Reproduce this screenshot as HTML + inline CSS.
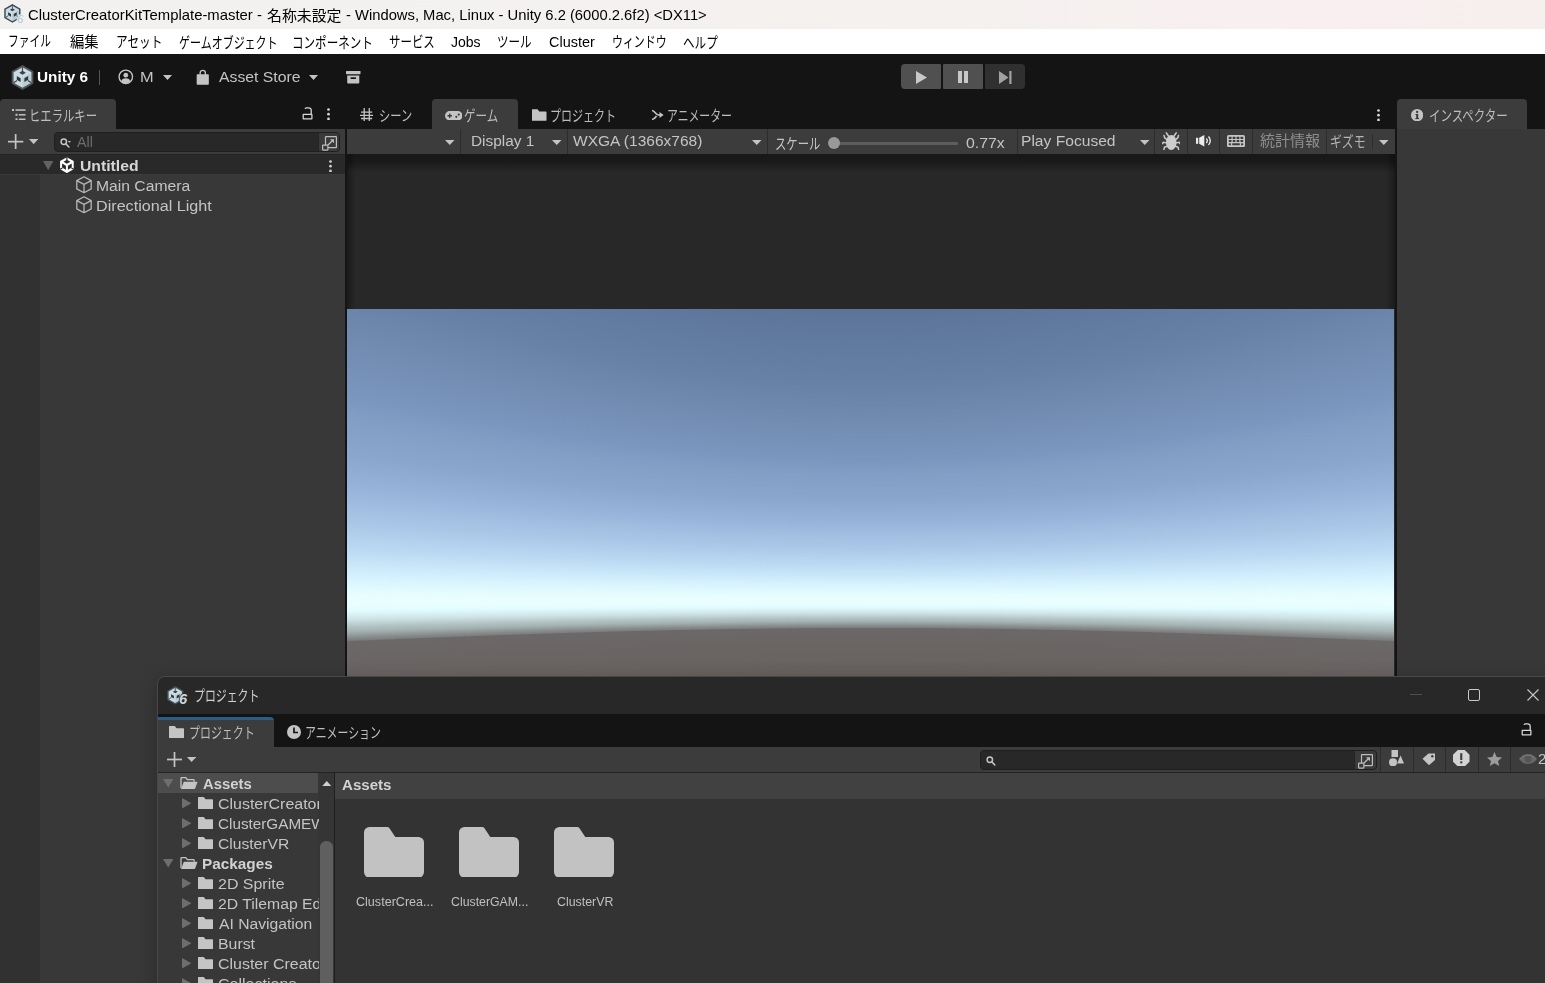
<!DOCTYPE html>
<html lang="ja"><head><meta charset="utf-8"><title>Unity</title>
<style>
html,body{margin:0;padding:0}
body{width:1545px;height:983px;overflow:hidden;background:#141414;position:relative;font-family:"Liberation Sans","Noto Sans CJK JP",sans-serif}
.r{position:absolute;display:block}
.t{position:absolute;white-space:nowrap;line-height:20px;transform-origin:0 0;font-family:"Liberation Sans","Noto Sans CJK JP",sans-serif;filter:grayscale(1)}
.sky{overflow:hidden;--g:linear-gradient(to bottom,#5a7096 0.00%,#5d7499 7.14%,#6680a6 25.00%,#738db3 35.95%,#7b96be 42.86%,#829ec5 46.67%,#8aa6cd 52.62%,#97b3d9 57.86%,#a9c5e6 63.33%,#b8d5f1 67.26%,#c6e3f8 69.93%,#d6f2fe 72.62%,#e5fdff 75.24%,#ebfeff 76.67%,#e5fdff 77.86%,#dffbff 78.21%,#cfe3e6 79.52%,#b3c4c5 80.71%,#a3b1b1 81.55%,#888c8d 82.52%,#7c7e7f 82.98%,#6c6868 83.17%,#67605d 94.76%,#665f5c 100.00%)}
.sky i{position:absolute;top:0;height:100%;background-image:var(--g);background-repeat:no-repeat;background-color:#665f5c}
</style></head>
<body>
<div class="r" style="left:0px;top:0px;width:1545px;height:29px;background:linear-gradient(to right,#f3f1f0 0%,#f4f1ef 62%,#f9eff0 84%,#f7eeee 100%);"></div>
<div class="r" style="left:0px;top:29px;width:1545px;height:25px;background:#ffffff;"></div>
<svg class="r" style="left:1.5999999999999996px;top:3.1999999999999993px;overflow:visible" width="20.8" height="20.8" viewBox="-13.830 -13.830 27.660 27.660"><polygon points="0,-12.5 10.83,-6.25 10.83,6.25 0,12.5 -10.83,6.25 -10.83,-6.25" fill="#3d4955"/><polygon points="0,-10.3 8.92,-5.15 8.92,5.15 0,10.3 -8.92,5.15 -8.92,-5.15" fill="#c8dce1"/><polygon points="0,0.4 8.92,-4.75 8.92,5.15 0,10.3" fill="#000" opacity=".07"/><polygon points="0,-6.7 3.3,-4.7 0,-2.7 -3.3,-4.7" fill="#3a4148"/><polygon points="-5.7,-1.5 -1.9,0.7 -1.9,4.4 -5.7,2.2" fill="#2f363d"/><polygon points="5.7,-1.5 1.9,0.7 1.9,4.4 5.700,2.2" fill="#2f363d"/><path d="M0-10.3V-6.5M-8.92 5.15-5.4 3.1M8.92 5.15 5.4 3.1" stroke="#3a4148" stroke-width="1.1" fill="none"/><text x="6" y="12.400" font-family="Liberation Sans, sans-serif" font-size="15" font-weight="normal" font-style="italic" fill="#a9c5cd" stroke="#f3f1f0" stroke-width="2.200" paint-order="stroke">6</text></svg>
<div class="t" style="left:28.01px;top:5.00px;font-size:15px;color:#000;transform:scaleX(0.9915)">ClusterCreatorKitTemplate-master -</div>
<div class="t" style="left:266.51px;top:5.50px;font-size:15px;color:#000;transform:scaleX(0.9932)">名称未設定</div>
<div class="t" style="left:345.81px;top:5.00px;font-size:15px;color:#000;transform:scaleX(0.9841)">- Windows, Mac, Linux - Unity 6.2 (6000.2.6f2) &lt;DX11&gt;</div>
<div class="t" style="left:7.54px;top:31.00px;font-size:15px;color:#000;transform:scaleX(0.7143)">ファイル</div>
<div class="t" style="left:69.50px;top:32.00px;font-size:15px;color:#000;transform:scaleX(0.9558)">編集</div>
<div class="t" style="left:116.22px;top:31.50px;font-size:15px;color:#000;transform:scaleX(0.7766)">アセット</div>
<div class="t" style="left:178.77px;top:32.50px;font-size:15px;color:#000;transform:scaleX(0.7328)">ゲームオブジェクト</div>
<div class="t" style="left:292.48px;top:32.50px;font-size:15px;color:#000;transform:scaleX(0.7704)">コンポーネント</div>
<div class="t" style="left:388.74px;top:32.00px;font-size:15px;color:#000;transform:scaleX(0.7633)">サービス</div>
<div class="t" style="left:497.23px;top:31.50px;font-size:15px;color:#000;transform:scaleX(0.7672)">ツール</div>
<div class="t" style="left:611.82px;top:32.00px;font-size:15px;color:#000;transform:scaleX(0.7283)">ウィンドウ</div>
<div class="t" style="left:683.23px;top:32.50px;font-size:15px;color:#000;transform:scaleX(0.7727)">ヘルプ</div>
<div class="t" style="left:451.00px;top:32.00px;font-size:15px;color:#000;transform:scaleX(0.9355)">Jobs</div>
<div class="t" style="left:548.55px;top:32.00px;font-size:15px;color:#000;transform:scaleX(0.9641)">Cluster</div>
<div class="r" style="left:0px;top:54px;width:1545px;height:45px;background:#141414;"></div>
<svg class="r" style="left:8.7px;top:63.5px;" width="27.0" height="27.0" viewBox="-13.500 -13.500 27.000 27.000"><polygon points="0,-12.5 10.83,-6.25 10.83,6.25 0,12.5 -10.83,6.25 -10.83,-6.25" fill="#50555a"/><polygon points="0,-10.3 8.92,-5.15 8.92,5.15 0,10.3 -8.92,5.15 -8.92,-5.15" fill="#c8dce1"/><polygon points="0,0.4 8.92,-4.75 8.92,5.15 0,10.3" fill="#000" opacity=".07"/><polygon points="0,-6.7 3.3,-4.7 0,-2.7 -3.3,-4.7" fill="#3a4148"/><polygon points="-5.7,-1.5 -1.9,0.7 -1.9,4.4 -5.7,2.2" fill="#2f363d"/><polygon points="5.7,-1.5 1.9,0.7 1.9,4.4 5.700,2.2" fill="#2f363d"/><path d="M0-10.3V-6.5M-8.92 5.15-5.4 3.1M8.92 5.15 5.4 3.1" stroke="#3a4148" stroke-width="1.1" fill="none"/></svg>
<div class="t" style="left:36.98px;top:67.00px;font-size:15px;color:#ffffff;transform:scaleX(1.0204);font-weight:bold">Unity 6</div>
<div class="r" style="left:99px;top:69.5px;width:1px;height:15.3px;background:#555555;"></div>
<svg class="r" style="left:118.2px;top:69.3px;" width="15.6" height="15.6" viewBox="0 0 16 16"><circle cx="8" cy="8" r="6.9" fill="none" stroke="#c4c4c4" stroke-width="1.4"/><circle cx="8" cy="6.3" r="2.4" fill="#c4c4c4"/><path d="M3.2 12.6c1-2.4 2.6-3 4.8-3s3.800.6 4.800 3a6.800 6.800 0 0 1-9.600 0z" fill="#c4c4c4"/></svg>
<div class="t" style="left:139.91px;top:67.00px;font-size:15px;color:#c4c4c4;transform:scaleX(1.0909)">M</div>
<svg class="r" style="left:163px;top:75px;" width="9" height="5" viewBox="0 0 9 5"><polygon points="0,0 9,0 4.5,5" fill="#c4c4c4"/></svg>
<svg class="r" style="left:196px;top:68.5px;" width="13.5" height="16.5" viewBox="0 0 14 17"><path d="M1.500 5.500h11a.8.8 0 0 1 .8.8v9.200a.8.8 0 0 1-.8.8h-11a.8.8 0 0 1-.8-.8v-9.200a.8.8 0 0 1 .8-.8z" fill="#c4c4c4"/><path d="M4.300 6.500v-2.500a2.700 2.700 0 0 1 5.400 0v2.500" fill="none" stroke="#c4c4c4" stroke-width="1.400"/></svg>
<div class="t" style="left:219.00px;top:67.00px;font-size:15px;color:#c4c4c4;transform:scaleX(1.0519)">Asset Store</div>
<svg class="r" style="left:309px;top:75px;" width="9" height="5" viewBox="0 0 9 5"><polygon points="0,0 9,0 4.5,5" fill="#c4c4c4"/></svg>
<svg class="r" style="left:346px;top:71px;" width="14.5" height="12.5" viewBox="0 0 14.5 12.5"><rect x="0" y="0" width="14.500" height="3.200" rx=".6" fill="#c4c4c4"/><path d="M1.200 4.600h12.100v7a.9.9 0 0 1-.9.9h-10.300a.9.9 0 0 1-.9-.9z" fill="#c4c4c4"/><rect x="4.600" y="6.300" width="5.300" height="1.700" fill="#141414"/></svg>
<div class="r" style="left:901px;top:64px;width:40px;height:25px;background:#505050;border-radius:4px 1px 1px 4px"></div>
<div class="r" style="left:943px;top:64px;width:40px;height:25px;background:#505050;border-radius:1px"></div>
<div class="r" style="left:985px;top:64px;width:40px;height:25px;background:#303030;border-radius:1px 4px 4px 1px"></div>
<svg class="r" style="left:915.5px;top:70.5px;" width="11" height="13" viewBox="0 0 11 13"><polygon points="0,0 11,6.500 0,13" fill="#c8c8c8"/></svg>
<div class="r" style="left:957.8px;top:70.5px;width:4px;height:12.8px;background:#c8c8c8;"></div>
<div class="r" style="left:964.3px;top:70.5px;width:4px;height:12.8px;background:#c8c8c8;"></div>
<svg class="r" style="left:998.7px;top:70.5px;" width="13" height="13" viewBox="0 0 13 13"><polygon points="0,0 9.500,6.500 0,13" fill="#a2a2a2"/><rect x="10.300" y="0" width="2.200" height="13" fill="#a2a2a2"/></svg>
<div class="r" style="left:0px;top:99px;width:116px;height:31px;background:#3c3c3c;border-radius:4px 4px 0 0"></div>
<svg class="r" style="left:12px;top:108.5px;" width="14" height="11.5" viewBox="0 0 14 11.5"><rect x="0" y="0" width="2" height="2" fill="#c4c4c4"/><rect x="3.500" y=".3" width="10" height="1.500" fill="#c4c4c4"/><rect x="3.500" y="4.800" width="2" height="2" fill="#c4c4c4"/><rect x="6.800" y="5.050" width="6.700" height="1.500" fill="#c4c4c4"/><rect x="3.500" y="9.300" width="2" height="2" fill="#c4c4c4"/><rect x="6.800" y="9.550" width="6.700" height="1.500" fill="#c4c4c4"/></svg>
<div class="t" style="left:28.73px;top:106.00px;font-size:15px;color:#bdbdbd;transform:scaleX(0.7558)">ヒエラルキー</div>
<svg class="r" style="left:301.5px;top:106.8px;" width="11.5" height="13" viewBox="0 0 11.5 13"><rect x="1.200" y="7.300" width="8.700" height="4.500" rx=".3" fill="none" stroke="#d8d8d8" stroke-width="1.250"/><path d="M9.200 7V3.500Q9.200 .9 6.500 .9H4.300Q3.300 .9 3.100 1.900" fill="none" stroke="#d8d8d8" stroke-width="1.300"/></svg>
<svg class="r" style="left:326.5px;top:107.9px;" width="3" height="12.4" viewBox="0 0 3 12.4"><circle cx="1.500" cy="1.500" r="1.350" fill="#d8d8d8"/><circle cx="1.500" cy="6.200" r="1.350" fill="#d8d8d8"/><circle cx="1.500" cy="10.900" r="1.350" fill="#d8d8d8"/></svg>
<div class="r" style="left:0px;top:129px;width:345px;height:25px;background:#3c3c3c;"></div>
<div class="r" style="left:0px;top:154px;width:345px;height:829px;background:#383838;"></div>
<div class="r" style="left:0px;top:154px;width:40px;height:829px;background:#313131;"></div>
<div class="r" style="left:0px;top:154px;width:345px;height:20.5px;background:#292929;"></div>
<div class="r" style="left:0px;top:153.8px;width:345px;height:1.2px;background:#232323;"></div>
<div class="r" style="left:0px;top:173.8px;width:345px;height:1.2px;background:#3b3b3b;"></div>
<svg class="r" style="left:8.3px;top:134.2px;" width="15.3" height="15.3" viewBox="0 0 15.3 15.3"><rect x="0" y="6.800000000000001" width="15.3" height="1.700" fill="#c4c4c4"/><rect x="6.800000000000001" y="0" width="1.700" height="15.3" fill="#c4c4c4"/></svg>
<svg class="r" style="left:28.8px;top:139.2px;" width="9.2" height="5.2" viewBox="0 0 9.2 5.2"><polygon points="0,0 9.2,0 4.6,5.2" fill="#c4c4c4"/></svg>
<div class="r" style="left:54px;top:132.2px;width:286.4px;height:19.4px;background:#282828;border-radius:4px;border:1px solid #1f1f1f;box-sizing:border-box"></div>
<div class="r" style="left:317.9px;top:133.2px;width:21.5px;height:17.4px;background:#3a3a3a;border-radius:0 3px 3px 0;border-left:1px solid #242424;box-sizing:border-box"></div>
<svg class="r" style="left:322.29999999999995px;top:135.49999999999997px;" width="15" height="15" viewBox="0 0 15 15"><rect x="3.500" y=".6" width="10.900" height="11.100" rx=".6" fill="none" stroke="#bdbdbd" stroke-width="1.200"/><rect x=".6" y="9.100" width="5.300" height="5" rx=".5" fill="#3a3a3a" stroke="#bdbdbd" stroke-width="1.200"/><path d="M6 9l4.800-4.800" fill="none" stroke="#bdbdbd" stroke-width="1.300"/><polygon points="8,3.200 12,3.200 12,7.200" fill="#bdbdbd"/></svg>
<svg class="r" style="left:60px;top:137.6px;" width="12" height="10" viewBox="0 0 12 10"><circle cx="3.800" cy="3.800" r="2.700" fill="none" stroke="#c4c4c4" stroke-width="1.500"/><path d="M5.800 5.800l3 3.200" stroke="#c4c4c4" stroke-width="1.600" stroke-linecap="round"/><polygon points="7.800,2.900 11,2.900 9.400,4.700" fill="#c4c4c4"/></svg>
<div class="t" style="left:76.98px;top:132.00px;font-size:14px;color:#6c6c6c;transform:scaleX(1.0174)">All</div>
<svg class="r" style="left:42.7px;top:160.8px;" width="10.4" height="9.2" viewBox="0 0 10.4 9.2"><polygon points="0,0 10.4,0 5.2,9.2" fill="#626262"/></svg>
<svg class="r" style="left:59.2px;top:156.6px;" width="15.8" height="16.4" viewBox="0 0 16 16.5"><polygon points="8,.2 14.900,4.100 14.900,12.400 8,16.300 1.100,12.400 1.100,4.100" fill="#ffffff"/><polygon points="8,2.700 11.500,4.700 8,6.700 4.500,4.700" fill="#292929"/><polygon points="3.100,6.500 7,8.700 7,12.900 3.100,10.700" fill="#292929"/><polygon points="12.900,6.500 9,8.700 9,12.900 12.900,10.700" fill="#292929"/><path stroke="#292929" stroke-width="1.200" fill="none" d="M8 .2v2.800M1.100 12.400l2.300-1.300M14.900 12.400l-2.300-1.300"/></svg>
<div class="t" style="left:79.86px;top:156.00px;font-size:14px;color:#d6d6d6;transform:scaleX(1.1243);font-weight:bold">Untitled</div>
<svg class="r" style="left:328.5px;top:159.5px;" width="3" height="12.4" viewBox="0 0 3 12.4"><circle cx="1.500" cy="1.500" r="1.350" fill="#d0d0d0"/><circle cx="1.500" cy="6.200" r="1.350" fill="#d0d0d0"/><circle cx="1.500" cy="10.900" r="1.350" fill="#d0d0d0"/></svg>
<svg class="r" style="left:76px;top:176.3px;" width="16" height="17.5" viewBox="0 0 16 17.5"><path d="M8 .8 15.200 4.600 15.200 12.900 8 16.700 .8 12.900 .8 4.600z M.8 4.600 8 8.400 15.200 4.600 M8 8.400v8.300" fill="none" stroke="#b6b6b6" stroke-width="1.300" stroke-linejoin="round"/></svg>
<div class="t" style="left:95.88px;top:176.00px;font-size:14px;color:#c4c4c4;transform:scaleX(1.1205)">Main Camera</div>
<svg class="r" style="left:76px;top:196.3px;" width="16" height="17.5" viewBox="0 0 16 17.5"><path d="M8 .8 15.200 4.600 15.200 12.900 8 16.700 .8 12.900 .8 4.600z M.8 4.600 8 8.400 15.200 4.600 M8 8.400v8.300" fill="none" stroke="#b6b6b6" stroke-width="1.300" stroke-linejoin="round"/></svg>
<div class="t" style="left:95.84px;top:196.00px;font-size:14px;color:#c4c4c4;transform:scaleX(1.1536)">Directional Light</div>
<div class="r" style="left:432px;top:99px;width:86px;height:30px;background:#3c3c3c;border-radius:4px 4px 0 0"></div>
<svg class="r" style="left:359.7px;top:107.6px;" width="13.2" height="13.4" viewBox="0 0 13.2 13.4"><path d="M4.200 0v13.400M9.300 0v13.400M1 4.200h11.200M0 7.400h13.200M1 10.500h11.200" stroke="#c4c4c4" stroke-width="1.300" fill="none"/></svg>
<div class="t" style="left:378.76px;top:105.50px;font-size:15px;color:#bdbdbd;transform:scaleX(0.7492)">シーン</div>
<svg class="r" style="left:444.5px;top:110.5px;" width="17.5" height="9.5" viewBox="0 0 17.5 9.5"><rect x="0" y="0" width="17.500" height="9.500" rx="4.750" fill="#c4c4c4"/><path d="M4.700 2.500v4.500M2.450 4.750h4.500" stroke="#3c3c3c" stroke-width="1.300"/><circle cx="11.300" cy="5.800" r="1.100" fill="#3c3c3c"/><circle cx="13.800" cy="3.600" r="1.100" fill="#3c3c3c"/></svg>
<div class="t" style="left:464.23px;top:106.00px;font-size:15px;color:#bdbdbd;transform:scaleX(0.7674)">ゲーム</div>
<svg class="r" style="left:532px;top:109px;" width="14.5" height="12" viewBox="0 0 15 12"><path d="M.6 0h5.200l1.700 2.300h6.900a.6.6 0 0 1 .6.600v8.500a.6.6 0 0 1-.6.600h-13.800a.6.6 0 0 1-.6-.6v-10.800a.6.6 0 0 1 .6-.6z" fill="#c4c4c4"/></svg>
<div class="t" style="left:550.28px;top:105.70px;font-size:15px;color:#bdbdbd;transform:scaleX(0.7322)">プロジェクト</div>
<svg class="r" style="left:651px;top:109px;" width="12.5" height="12" viewBox="0 0 12.5 12"><path d="M1 1.500c3 .3 3.500 4.200 6.500 4.500h4M1 10.500c2.500-.3 3.500-2 4.500-3.500" fill="none" stroke="#c4c4c4" stroke-width="1.700"/><polygon points="8.500,3 12.500,6 8.500,9" fill="#c4c4c4"/></svg>
<div class="t" style="left:666.53px;top:106.00px;font-size:15px;color:#bdbdbd;transform:scaleX(0.7234)">アニメーター</div>
<svg class="r" style="left:1376.5px;top:108.5px;" width="3" height="12.4" viewBox="0 0 3 12.4"><circle cx="1.500" cy="1.500" r="1.350" fill="#d8d8d8"/><circle cx="1.500" cy="6.200" r="1.350" fill="#d8d8d8"/><circle cx="1.500" cy="10.900" r="1.350" fill="#d8d8d8"/></svg>
<div class="r" style="left:347px;top:129px;width:1048px;height:25px;background:#3c3c3c;"></div>
<div class="r" style="left:347px;top:154px;width:1047.5px;height:829px;background:#282828;"></div>
<div class="r" style="left:347px;top:154px;width:1047.5px;height:18px;background:linear-gradient(to bottom,rgba(0,0,0,.42) 0,rgba(0,0,0,.36) 45%,rgba(0,0,0,0) 100%);"></div>
<div class="r" style="left:347px;top:154px;width:9px;height:523px;background:linear-gradient(to right,rgba(0,0,0,.32),rgba(0,0,0,0));"></div>
<div class="r" style="left:1385.5px;top:154px;width:9px;height:155px;background:linear-gradient(to left,rgba(0,0,0,.32),rgba(0,0,0,0));"></div>
<div class="r" style="left:460px;top:129px;width:1.3px;height:25px;background:#2c2c2c;"></div>
<div class="r" style="left:567px;top:129px;width:1.3px;height:25px;background:#2c2c2c;"></div>
<div class="r" style="left:767px;top:129px;width:1.3px;height:25px;background:#2c2c2c;"></div>
<div class="r" style="left:1017px;top:129px;width:1.3px;height:25px;background:#2c2c2c;"></div>
<div class="r" style="left:1154px;top:129px;width:1.3px;height:25px;background:#2c2c2c;"></div>
<div class="r" style="left:1187px;top:129px;width:1.3px;height:25px;background:#2c2c2c;"></div>
<div class="r" style="left:1219px;top:129px;width:1.3px;height:25px;background:#2c2c2c;"></div>
<div class="r" style="left:1252px;top:129px;width:1.3px;height:25px;background:#2c2c2c;"></div>
<div class="r" style="left:1326px;top:129px;width:1.3px;height:25px;background:#2c2c2c;"></div>
<div class="r" style="left:1372px;top:133.5px;width:1px;height:15px;background:#2c2c2c;"></div>
<svg class="r" style="left:445px;top:139.5px;" width="9.5" height="5" viewBox="0 0 9.5 5"><polygon points="0,0 9.5,0 4.75,5" fill="#c4c4c4"/></svg>
<div class="t" style="left:471.40px;top:131.00px;font-size:14px;color:#c4c4c4;transform:scaleX(1.0983)">Display 1</div>
<svg class="r" style="left:552px;top:139.5px;" width="9.5" height="5" viewBox="0 0 9.5 5"><polygon points="0,0 9.5,0 4.75,5" fill="#c4c4c4"/></svg>
<div class="t" style="left:572.50px;top:131.00px;font-size:14px;color:#c4c4c4;transform:scaleX(1.1078)">WXGA (1366x768)</div>
<svg class="r" style="left:752px;top:139.5px;" width="9.5" height="5" viewBox="0 0 9.5 5"><polygon points="0,0 9.5,0 4.75,5" fill="#c4c4c4"/></svg>
<div class="t" style="left:775.26px;top:133.75px;font-size:15px;color:#c4c4c4;transform:scaleX(0.7582)">スケール</div>
<div class="r" style="left:838px;top:142px;width:120px;height:2.5px;background:#5e5e5e;border-radius:1px"></div>
<div class="r" style="left:828px;top:137px;width:12px;height:12px;background:#999999;border-radius:6px"></div>
<div class="t" style="left:966.00px;top:133.00px;font-size:14px;color:#c4c4c4;transform:scaleX(1.1325)">0.77x</div>
<div class="t" style="left:1021.39px;top:131.00px;font-size:14px;color:#c4c4c4;transform:scaleX(1.1145)">Play Focused</div>
<svg class="r" style="left:1140px;top:139.5px;" width="9.5" height="5" viewBox="0 0 9.5 5"><polygon points="0,0 9.5,0 4.75,5" fill="#c4c4c4"/></svg>
<svg class="r" style="left:1161.8px;top:131.8px;" width="18.5" height="18.2" viewBox="0 0 18.5 18.2"><ellipse cx="9.250" cy="10.500" rx="5.300" ry="7.500" fill="#cdcdcd"/><path d="M6.400 4 4.300 .8M12.100 4 14.200 .8M5 7.600 2.700 5.800 2 3.400M13.500 7.600 15.800 5.800 16.500 3.400M4.200 10.900 1.300 10.200 .5 11.700M14.300 10.900 17.200 10.200 18 11.700M4.900 14.300 2.400 15.300 1.900 17.600M13.600 14.300 16.100 15.300 16.600 17.600" stroke="#cdcdcd" stroke-width="1.500" fill="none" stroke-linecap="round" stroke-linejoin="round"/></svg>
<svg class="r" style="left:1195.5px;top:135px;" width="16" height="11.5" viewBox="0 0 16 11.5"><rect x="0" y="2.800" width="2.200" height="6" fill="#ececec"/><polygon points="3.200,2.800 8.300,0 8.300,11.500 3.200,8.800" fill="#ececec"/><path d="M10.300 3.500a3.200 3.200 0 0 1 0 4.600M12.500 1.600a6 6 0 0 1 0 8.400" stroke="#ececec" stroke-width="1.400" fill="none"/></svg>
<svg class="r" style="left:1227px;top:134.8px;" width="18" height="12.2" viewBox="0 0 18 12.2"><rect x="0" y="0" width="18" height="12.200" rx="1.600" fill="#c4c4c4"/><rect x="1.8" y="1.8" width="2.700" height="2.100" rx=".5" fill="#3c3c3c"/><rect x="5.7" y="1.8" width="2.700" height="2.100" rx=".5" fill="#3c3c3c"/><rect x="9.6" y="1.8" width="2.700" height="2.100" rx=".5" fill="#3c3c3c"/><rect x="13.5" y="1.8" width="2.700" height="2.100" rx=".5" fill="#3c3c3c"/><rect x="1.8" y="5.0" width="2.700" height="2.100" rx=".5" fill="#3c3c3c"/><rect x="5.7" y="5.0" width="2.700" height="2.100" rx=".5" fill="#3c3c3c"/><rect x="9.6" y="5.0" width="2.700" height="2.100" rx=".5" fill="#3c3c3c"/><rect x="13.5" y="5.0" width="2.700" height="2.100" rx=".5" fill="#3c3c3c"/><rect x="1.800" y="8.200" width="2.200" height="2.100" rx=".5" fill="#3c3c3c"/><rect x="5.200" y="8.200" width="7.600" height="2.100" rx=".5" fill="#3c3c3c"/><rect x="14" y="8.200" width="2.200" height="2.100" rx=".5" fill="#3c3c3c"/></svg>
<div class="t" style="left:1260.00px;top:131.40px;font-size:15px;color:#8e8e8e;transform:scaleX(1.0000)">統計情報</div>
<div class="t" style="left:1330.21px;top:131.50px;font-size:15px;color:#b4b4b4;transform:scaleX(0.7907)">ギズモ</div>
<svg class="r" style="left:1379px;top:139.5px;" width="9.5" height="5" viewBox="0 0 9.5 5"><polygon points="0,0 9.5,0 4.75,5" fill="#c4c4c4"/></svg>
<div class="r sky" style="left:347px;top:309px;width:1047.2px;height:368px"><i style="left:0px;width:4px;background-size:100% 610.4px;background-position:0 -175.1px"></i><i style="left:4px;width:4px;background-size:100% 607.9px;background-position:0 -173.2px"></i><i style="left:8px;width:4px;background-size:100% 605.5px;background-position:0 -171.3px"></i><i style="left:12px;width:4px;background-size:100% 603.0px;background-position:0 -169.5px"></i><i style="left:16px;width:4px;background-size:100% 600.6px;background-position:0 -167.6px"></i><i style="left:20px;width:4px;background-size:100% 598.2px;background-position:0 -165.8px"></i><i style="left:24px;width:4px;background-size:100% 595.8px;background-position:0 -163.9px"></i><i style="left:28px;width:4px;background-size:100% 593.4px;background-position:0 -162.1px"></i><i style="left:32px;width:4px;background-size:100% 591.0px;background-position:0 -160.3px"></i><i style="left:36px;width:4px;background-size:100% 588.6px;background-position:0 -158.5px"></i><i style="left:40px;width:4px;background-size:100% 586.2px;background-position:0 -156.6px"></i><i style="left:44px;width:4px;background-size:100% 583.9px;background-position:0 -154.8px"></i><i style="left:48px;width:4px;background-size:100% 581.5px;background-position:0 -153.1px"></i><i style="left:52px;width:4px;background-size:100% 579.2px;background-position:0 -151.3px"></i><i style="left:56px;width:4px;background-size:100% 576.8px;background-position:0 -149.5px"></i><i style="left:60px;width:4px;background-size:100% 574.5px;background-position:0 -147.7px"></i><i style="left:64px;width:4px;background-size:100% 572.2px;background-position:0 -146.0px"></i><i style="left:68px;width:4px;background-size:100% 569.9px;background-position:0 -144.2px"></i><i style="left:72px;width:4px;background-size:100% 567.6px;background-position:0 -142.5px"></i><i style="left:76px;width:4px;background-size:100% 565.3px;background-position:0 -140.7px"></i><i style="left:80px;width:4px;background-size:100% 563.1px;background-position:0 -139.0px"></i><i style="left:84px;width:4px;background-size:100% 560.8px;background-position:0 -137.3px"></i><i style="left:88px;width:4px;background-size:100% 558.6px;background-position:0 -135.6px"></i><i style="left:92px;width:4px;background-size:100% 556.3px;background-position:0 -133.9px"></i><i style="left:96px;width:4px;background-size:100% 554.1px;background-position:0 -132.2px"></i><i style="left:100px;width:4px;background-size:100% 551.9px;background-position:0 -130.5px"></i><i style="left:104px;width:4px;background-size:100% 549.7px;background-position:0 -128.8px"></i><i style="left:108px;width:4px;background-size:100% 547.5px;background-position:0 -127.2px"></i><i style="left:112px;width:4px;background-size:100% 545.4px;background-position:0 -125.5px"></i><i style="left:116px;width:4px;background-size:100% 543.2px;background-position:0 -123.9px"></i><i style="left:120px;width:4px;background-size:100% 541.1px;background-position:0 -122.2px"></i><i style="left:124px;width:4px;background-size:100% 538.9px;background-position:0 -120.6px"></i><i style="left:128px;width:4px;background-size:100% 536.8px;background-position:0 -119.0px"></i><i style="left:132px;width:4px;background-size:100% 534.7px;background-position:0 -117.4px"></i><i style="left:136px;width:4px;background-size:100% 532.6px;background-position:0 -115.8px"></i><i style="left:140px;width:4px;background-size:100% 530.5px;background-position:0 -114.2px"></i><i style="left:144px;width:4px;background-size:100% 528.5px;background-position:0 -112.6px"></i><i style="left:148px;width:4px;background-size:100% 526.4px;background-position:0 -111.1px"></i><i style="left:152px;width:4px;background-size:100% 524.4px;background-position:0 -109.5px"></i><i style="left:156px;width:4px;background-size:100% 522.3px;background-position:0 -108.0px"></i><i style="left:160px;width:4px;background-size:100% 520.3px;background-position:0 -106.4px"></i><i style="left:164px;width:4px;background-size:100% 518.3px;background-position:0 -104.9px"></i><i style="left:168px;width:4px;background-size:100% 516.4px;background-position:0 -103.4px"></i><i style="left:172px;width:4px;background-size:100% 514.4px;background-position:0 -101.9px"></i><i style="left:176px;width:4px;background-size:100% 512.4px;background-position:0 -100.4px"></i><i style="left:180px;width:4px;background-size:100% 510.5px;background-position:0 -98.9px"></i><i style="left:184px;width:4px;background-size:100% 508.6px;background-position:0 -97.5px"></i><i style="left:188px;width:4px;background-size:100% 506.7px;background-position:0 -96.0px"></i><i style="left:192px;width:4px;background-size:100% 504.8px;background-position:0 -94.6px"></i><i style="left:196px;width:4px;background-size:100% 502.9px;background-position:0 -93.2px"></i><i style="left:200px;width:4px;background-size:100% 501.0px;background-position:0 -91.7px"></i><i style="left:204px;width:4px;background-size:100% 499.2px;background-position:0 -90.3px"></i><i style="left:208px;width:4px;background-size:100% 497.4px;background-position:0 -89.0px"></i><i style="left:212px;width:4px;background-size:100% 495.6px;background-position:0 -87.6px"></i><i style="left:216px;width:4px;background-size:100% 493.8px;background-position:0 -86.2px"></i><i style="left:220px;width:4px;background-size:100% 492.0px;background-position:0 -84.9px"></i><i style="left:224px;width:4px;background-size:100% 490.2px;background-position:0 -83.5px"></i><i style="left:228px;width:4px;background-size:100% 488.5px;background-position:0 -82.2px"></i><i style="left:232px;width:4px;background-size:100% 486.8px;background-position:0 -80.9px"></i><i style="left:236px;width:4px;background-size:100% 485.1px;background-position:0 -79.6px"></i><i style="left:240px;width:4px;background-size:100% 483.4px;background-position:0 -78.3px"></i><i style="left:244px;width:4px;background-size:100% 481.7px;background-position:0 -77.0px"></i><i style="left:248px;width:4px;background-size:100% 480.1px;background-position:0 -75.8px"></i><i style="left:252px;width:4px;background-size:100% 478.4px;background-position:0 -74.5px"></i><i style="left:256px;width:4px;background-size:100% 476.8px;background-position:0 -73.3px"></i><i style="left:260px;width:4px;background-size:100% 475.2px;background-position:0 -72.1px"></i><i style="left:264px;width:4px;background-size:100% 473.6px;background-position:0 -70.9px"></i><i style="left:268px;width:4px;background-size:100% 472.1px;background-position:0 -69.7px"></i><i style="left:272px;width:4px;background-size:100% 470.5px;background-position:0 -68.5px"></i><i style="left:276px;width:4px;background-size:100% 469.0px;background-position:0 -67.3px"></i><i style="left:280px;width:4px;background-size:100% 467.5px;background-position:0 -66.2px"></i><i style="left:284px;width:4px;background-size:100% 466.0px;background-position:0 -65.1px"></i><i style="left:288px;width:4px;background-size:100% 464.6px;background-position:0 -64.0px"></i><i style="left:292px;width:4px;background-size:100% 463.1px;background-position:0 -62.9px"></i><i style="left:296px;width:4px;background-size:100% 461.7px;background-position:0 -61.8px"></i><i style="left:300px;width:4px;background-size:100% 460.3px;background-position:0 -60.7px"></i><i style="left:304px;width:4px;background-size:100% 458.9px;background-position:0 -59.7px"></i><i style="left:308px;width:4px;background-size:100% 457.6px;background-position:0 -58.6px"></i><i style="left:312px;width:4px;background-size:100% 456.2px;background-position:0 -57.6px"></i><i style="left:316px;width:4px;background-size:100% 454.9px;background-position:0 -56.6px"></i><i style="left:320px;width:4px;background-size:100% 453.6px;background-position:0 -55.6px"></i><i style="left:324px;width:4px;background-size:100% 452.4px;background-position:0 -54.7px"></i><i style="left:328px;width:4px;background-size:100% 451.1px;background-position:0 -53.7px"></i><i style="left:332px;width:4px;background-size:100% 449.9px;background-position:0 -52.8px"></i><i style="left:336px;width:4px;background-size:100% 448.7px;background-position:0 -51.8px"></i><i style="left:340px;width:4px;background-size:100% 447.5px;background-position:0 -50.9px"></i><i style="left:344px;width:4px;background-size:100% 446.3px;background-position:0 -50.1px"></i><i style="left:348px;width:4px;background-size:100% 445.2px;background-position:0 -49.2px"></i><i style="left:352px;width:4px;background-size:100% 444.1px;background-position:0 -48.3px"></i><i style="left:356px;width:4px;background-size:100% 443.0px;background-position:0 -47.5px"></i><i style="left:360px;width:4px;background-size:100% 441.9px;background-position:0 -46.7px"></i><i style="left:364px;width:4px;background-size:100% 440.9px;background-position:0 -45.9px"></i><i style="left:368px;width:4px;background-size:100% 439.9px;background-position:0 -45.1px"></i><i style="left:372px;width:4px;background-size:100% 438.9px;background-position:0 -44.4px"></i><i style="left:376px;width:4px;background-size:100% 437.9px;background-position:0 -43.6px"></i><i style="left:380px;width:4px;background-size:100% 436.9px;background-position:0 -42.9px"></i><i style="left:384px;width:4px;background-size:100% 436.0px;background-position:0 -42.2px"></i><i style="left:388px;width:4px;background-size:100% 435.1px;background-position:0 -41.5px"></i><i style="left:392px;width:4px;background-size:100% 434.2px;background-position:0 -40.9px"></i><i style="left:396px;width:4px;background-size:100% 433.4px;background-position:0 -40.2px"></i><i style="left:400px;width:4px;background-size:100% 432.6px;background-position:0 -39.6px"></i><i style="left:404px;width:4px;background-size:100% 431.8px;background-position:0 -39.0px"></i><i style="left:408px;width:4px;background-size:100% 431.0px;background-position:0 -38.4px"></i><i style="left:412px;width:4px;background-size:100% 430.2px;background-position:0 -37.8px"></i><i style="left:416px;width:4px;background-size:100% 429.5px;background-position:0 -37.3px"></i><i style="left:420px;width:4px;background-size:100% 428.8px;background-position:0 -36.7px"></i><i style="left:424px;width:4px;background-size:100% 428.2px;background-position:0 -36.2px"></i><i style="left:428px;width:4px;background-size:100% 427.5px;background-position:0 -35.7px"></i><i style="left:432px;width:4px;background-size:100% 426.9px;background-position:0 -35.2px"></i><i style="left:436px;width:4px;background-size:100% 426.3px;background-position:0 -34.8px"></i><i style="left:440px;width:4px;background-size:100% 425.7px;background-position:0 -34.4px"></i><i style="left:444px;width:4px;background-size:100% 425.2px;background-position:0 -33.9px"></i><i style="left:448px;width:4px;background-size:100% 424.7px;background-position:0 -33.6px"></i><i style="left:452px;width:4px;background-size:100% 424.2px;background-position:0 -33.2px"></i><i style="left:456px;width:4px;background-size:100% 423.7px;background-position:0 -32.8px"></i><i style="left:460px;width:4px;background-size:100% 423.3px;background-position:0 -32.5px"></i><i style="left:464px;width:4px;background-size:100% 422.9px;background-position:0 -32.2px"></i><i style="left:468px;width:4px;background-size:100% 422.5px;background-position:0 -31.9px"></i><i style="left:472px;width:4px;background-size:100% 422.1px;background-position:0 -31.6px"></i><i style="left:476px;width:4px;background-size:100% 421.8px;background-position:0 -31.4px"></i><i style="left:480px;width:4px;background-size:100% 421.5px;background-position:0 -31.1px"></i><i style="left:484px;width:4px;background-size:100% 421.2px;background-position:0 -30.9px"></i><i style="left:488px;width:4px;background-size:100% 421.0px;background-position:0 -30.8px"></i><i style="left:492px;width:4px;background-size:100% 420.8px;background-position:0 -30.6px"></i><i style="left:496px;width:4px;background-size:100% 420.6px;background-position:0 -30.4px"></i><i style="left:500px;width:4px;background-size:100% 420.4px;background-position:0 -30.3px"></i><i style="left:504px;width:4px;background-size:100% 420.3px;background-position:0 -30.2px"></i><i style="left:508px;width:4px;background-size:100% 420.2px;background-position:0 -30.1px"></i><i style="left:512px;width:4px;background-size:100% 420.1px;background-position:0 -30.1px"></i><i style="left:516px;width:4px;background-size:100% 420.0px;background-position:0 -30.0px"></i><i style="left:520px;width:4px;background-size:100% 420.0px;background-position:0 -30.0px"></i><i style="left:524px;width:4px;background-size:100% 420.0px;background-position:0 -30.0px"></i><i style="left:528px;width:4px;background-size:100% 420.0px;background-position:0 -30.0px"></i><i style="left:532px;width:4px;background-size:100% 420.1px;background-position:0 -30.1px"></i><i style="left:536px;width:4px;background-size:100% 420.2px;background-position:0 -30.1px"></i><i style="left:540px;width:4px;background-size:100% 420.3px;background-position:0 -30.2px"></i><i style="left:544px;width:4px;background-size:100% 420.4px;background-position:0 -30.3px"></i><i style="left:548px;width:4px;background-size:100% 420.6px;background-position:0 -30.4px"></i><i style="left:552px;width:4px;background-size:100% 420.8px;background-position:0 -30.6px"></i><i style="left:556px;width:4px;background-size:100% 421.0px;background-position:0 -30.8px"></i><i style="left:560px;width:4px;background-size:100% 421.2px;background-position:0 -30.9px"></i><i style="left:564px;width:4px;background-size:100% 421.5px;background-position:0 -31.1px"></i><i style="left:568px;width:4px;background-size:100% 421.8px;background-position:0 -31.4px"></i><i style="left:572px;width:4px;background-size:100% 422.1px;background-position:0 -31.6px"></i><i style="left:576px;width:4px;background-size:100% 422.5px;background-position:0 -31.9px"></i><i style="left:580px;width:4px;background-size:100% 422.9px;background-position:0 -32.2px"></i><i style="left:584px;width:4px;background-size:100% 423.3px;background-position:0 -32.5px"></i><i style="left:588px;width:4px;background-size:100% 423.7px;background-position:0 -32.8px"></i><i style="left:592px;width:4px;background-size:100% 424.2px;background-position:0 -33.2px"></i><i style="left:596px;width:4px;background-size:100% 424.7px;background-position:0 -33.6px"></i><i style="left:600px;width:4px;background-size:100% 425.2px;background-position:0 -33.9px"></i><i style="left:604px;width:4px;background-size:100% 425.7px;background-position:0 -34.4px"></i><i style="left:608px;width:4px;background-size:100% 426.3px;background-position:0 -34.8px"></i><i style="left:612px;width:4px;background-size:100% 426.9px;background-position:0 -35.2px"></i><i style="left:616px;width:4px;background-size:100% 427.5px;background-position:0 -35.7px"></i><i style="left:620px;width:4px;background-size:100% 428.2px;background-position:0 -36.2px"></i><i style="left:624px;width:4px;background-size:100% 428.8px;background-position:0 -36.7px"></i><i style="left:628px;width:4px;background-size:100% 429.5px;background-position:0 -37.3px"></i><i style="left:632px;width:4px;background-size:100% 430.2px;background-position:0 -37.8px"></i><i style="left:636px;width:4px;background-size:100% 431.0px;background-position:0 -38.4px"></i><i style="left:640px;width:4px;background-size:100% 431.8px;background-position:0 -39.0px"></i><i style="left:644px;width:4px;background-size:100% 432.6px;background-position:0 -39.6px"></i><i style="left:648px;width:4px;background-size:100% 433.4px;background-position:0 -40.2px"></i><i style="left:652px;width:4px;background-size:100% 434.2px;background-position:0 -40.9px"></i><i style="left:656px;width:4px;background-size:100% 435.1px;background-position:0 -41.5px"></i><i style="left:660px;width:4px;background-size:100% 436.0px;background-position:0 -42.2px"></i><i style="left:664px;width:4px;background-size:100% 436.9px;background-position:0 -42.9px"></i><i style="left:668px;width:4px;background-size:100% 437.9px;background-position:0 -43.6px"></i><i style="left:672px;width:4px;background-size:100% 438.9px;background-position:0 -44.4px"></i><i style="left:676px;width:4px;background-size:100% 439.9px;background-position:0 -45.1px"></i><i style="left:680px;width:4px;background-size:100% 440.9px;background-position:0 -45.9px"></i><i style="left:684px;width:4px;background-size:100% 441.9px;background-position:0 -46.7px"></i><i style="left:688px;width:4px;background-size:100% 443.0px;background-position:0 -47.5px"></i><i style="left:692px;width:4px;background-size:100% 444.1px;background-position:0 -48.3px"></i><i style="left:696px;width:4px;background-size:100% 445.2px;background-position:0 -49.2px"></i><i style="left:700px;width:4px;background-size:100% 446.3px;background-position:0 -50.1px"></i><i style="left:704px;width:4px;background-size:100% 447.5px;background-position:0 -50.9px"></i><i style="left:708px;width:4px;background-size:100% 448.7px;background-position:0 -51.8px"></i><i style="left:712px;width:4px;background-size:100% 449.9px;background-position:0 -52.8px"></i><i style="left:716px;width:4px;background-size:100% 451.1px;background-position:0 -53.7px"></i><i style="left:720px;width:4px;background-size:100% 452.4px;background-position:0 -54.7px"></i><i style="left:724px;width:4px;background-size:100% 453.6px;background-position:0 -55.6px"></i><i style="left:728px;width:4px;background-size:100% 454.9px;background-position:0 -56.6px"></i><i style="left:732px;width:4px;background-size:100% 456.2px;background-position:0 -57.6px"></i><i style="left:736px;width:4px;background-size:100% 457.6px;background-position:0 -58.6px"></i><i style="left:740px;width:4px;background-size:100% 458.9px;background-position:0 -59.7px"></i><i style="left:744px;width:4px;background-size:100% 460.3px;background-position:0 -60.7px"></i><i style="left:748px;width:4px;background-size:100% 461.7px;background-position:0 -61.8px"></i><i style="left:752px;width:4px;background-size:100% 463.1px;background-position:0 -62.9px"></i><i style="left:756px;width:4px;background-size:100% 464.6px;background-position:0 -64.0px"></i><i style="left:760px;width:4px;background-size:100% 466.0px;background-position:0 -65.1px"></i><i style="left:764px;width:4px;background-size:100% 467.5px;background-position:0 -66.2px"></i><i style="left:768px;width:4px;background-size:100% 469.0px;background-position:0 -67.3px"></i><i style="left:772px;width:4px;background-size:100% 470.5px;background-position:0 -68.5px"></i><i style="left:776px;width:4px;background-size:100% 472.1px;background-position:0 -69.7px"></i><i style="left:780px;width:4px;background-size:100% 473.6px;background-position:0 -70.9px"></i><i style="left:784px;width:4px;background-size:100% 475.2px;background-position:0 -72.1px"></i><i style="left:788px;width:4px;background-size:100% 476.8px;background-position:0 -73.3px"></i><i style="left:792px;width:4px;background-size:100% 478.4px;background-position:0 -74.5px"></i><i style="left:796px;width:4px;background-size:100% 480.1px;background-position:0 -75.8px"></i><i style="left:800px;width:4px;background-size:100% 481.7px;background-position:0 -77.0px"></i><i style="left:804px;width:4px;background-size:100% 483.4px;background-position:0 -78.3px"></i><i style="left:808px;width:4px;background-size:100% 485.1px;background-position:0 -79.6px"></i><i style="left:812px;width:4px;background-size:100% 486.8px;background-position:0 -80.9px"></i><i style="left:816px;width:4px;background-size:100% 488.5px;background-position:0 -82.2px"></i><i style="left:820px;width:4px;background-size:100% 490.2px;background-position:0 -83.5px"></i><i style="left:824px;width:4px;background-size:100% 492.0px;background-position:0 -84.9px"></i><i style="left:828px;width:4px;background-size:100% 493.8px;background-position:0 -86.2px"></i><i style="left:832px;width:4px;background-size:100% 495.6px;background-position:0 -87.6px"></i><i style="left:836px;width:4px;background-size:100% 497.4px;background-position:0 -89.0px"></i><i style="left:840px;width:4px;background-size:100% 499.2px;background-position:0 -90.3px"></i><i style="left:844px;width:4px;background-size:100% 501.0px;background-position:0 -91.7px"></i><i style="left:848px;width:4px;background-size:100% 502.9px;background-position:0 -93.2px"></i><i style="left:852px;width:4px;background-size:100% 504.8px;background-position:0 -94.6px"></i><i style="left:856px;width:4px;background-size:100% 506.7px;background-position:0 -96.0px"></i><i style="left:860px;width:4px;background-size:100% 508.6px;background-position:0 -97.5px"></i><i style="left:864px;width:4px;background-size:100% 510.5px;background-position:0 -98.9px"></i><i style="left:868px;width:4px;background-size:100% 512.4px;background-position:0 -100.4px"></i><i style="left:872px;width:4px;background-size:100% 514.4px;background-position:0 -101.9px"></i><i style="left:876px;width:4px;background-size:100% 516.4px;background-position:0 -103.4px"></i><i style="left:880px;width:4px;background-size:100% 518.3px;background-position:0 -104.9px"></i><i style="left:884px;width:4px;background-size:100% 520.3px;background-position:0 -106.4px"></i><i style="left:888px;width:4px;background-size:100% 522.3px;background-position:0 -108.0px"></i><i style="left:892px;width:4px;background-size:100% 524.4px;background-position:0 -109.5px"></i><i style="left:896px;width:4px;background-size:100% 526.4px;background-position:0 -111.1px"></i><i style="left:900px;width:4px;background-size:100% 528.5px;background-position:0 -112.6px"></i><i style="left:904px;width:4px;background-size:100% 530.5px;background-position:0 -114.2px"></i><i style="left:908px;width:4px;background-size:100% 532.6px;background-position:0 -115.8px"></i><i style="left:912px;width:4px;background-size:100% 534.7px;background-position:0 -117.4px"></i><i style="left:916px;width:4px;background-size:100% 536.8px;background-position:0 -119.0px"></i><i style="left:920px;width:4px;background-size:100% 538.9px;background-position:0 -120.6px"></i><i style="left:924px;width:4px;background-size:100% 541.1px;background-position:0 -122.2px"></i><i style="left:928px;width:4px;background-size:100% 543.2px;background-position:0 -123.9px"></i><i style="left:932px;width:4px;background-size:100% 545.4px;background-position:0 -125.5px"></i><i style="left:936px;width:4px;background-size:100% 547.5px;background-position:0 -127.2px"></i><i style="left:940px;width:4px;background-size:100% 549.7px;background-position:0 -128.8px"></i><i style="left:944px;width:4px;background-size:100% 551.9px;background-position:0 -130.5px"></i><i style="left:948px;width:4px;background-size:100% 554.1px;background-position:0 -132.2px"></i><i style="left:952px;width:4px;background-size:100% 556.3px;background-position:0 -133.9px"></i><i style="left:956px;width:4px;background-size:100% 558.6px;background-position:0 -135.6px"></i><i style="left:960px;width:4px;background-size:100% 560.8px;background-position:0 -137.3px"></i><i style="left:964px;width:4px;background-size:100% 563.1px;background-position:0 -139.0px"></i><i style="left:968px;width:4px;background-size:100% 565.3px;background-position:0 -140.7px"></i><i style="left:972px;width:4px;background-size:100% 567.6px;background-position:0 -142.5px"></i><i style="left:976px;width:4px;background-size:100% 569.9px;background-position:0 -144.2px"></i><i style="left:980px;width:4px;background-size:100% 572.2px;background-position:0 -146.0px"></i><i style="left:984px;width:4px;background-size:100% 574.5px;background-position:0 -147.7px"></i><i style="left:988px;width:4px;background-size:100% 576.8px;background-position:0 -149.5px"></i><i style="left:992px;width:4px;background-size:100% 579.2px;background-position:0 -151.3px"></i><i style="left:996px;width:4px;background-size:100% 581.5px;background-position:0 -153.1px"></i><i style="left:1000px;width:4px;background-size:100% 583.9px;background-position:0 -154.8px"></i><i style="left:1004px;width:4px;background-size:100% 586.2px;background-position:0 -156.6px"></i><i style="left:1008px;width:4px;background-size:100% 588.6px;background-position:0 -158.5px"></i><i style="left:1012px;width:4px;background-size:100% 591.0px;background-position:0 -160.3px"></i><i style="left:1016px;width:4px;background-size:100% 593.4px;background-position:0 -162.1px"></i><i style="left:1020px;width:4px;background-size:100% 595.8px;background-position:0 -163.9px"></i><i style="left:1024px;width:4px;background-size:100% 598.2px;background-position:0 -165.8px"></i><i style="left:1028px;width:4px;background-size:100% 600.6px;background-position:0 -167.6px"></i><i style="left:1032px;width:4px;background-size:100% 603.0px;background-position:0 -169.5px"></i><i style="left:1036px;width:4px;background-size:100% 605.5px;background-position:0 -171.3px"></i><i style="left:1040px;width:4px;background-size:100% 607.9px;background-position:0 -173.2px"></i><i style="left:1044px;width:3.2px;background-size:100% 610.4px;background-position:0 -175.1px"></i></div>
<div class="r" style="left:1397px;top:99px;width:130px;height:31px;background:#3c3c3c;border-radius:4px 4px 0 0"></div>
<div class="r" style="left:1397px;top:129px;width:148px;height:854px;background:#383838;"></div>
<svg class="r" style="left:1411px;top:108.7px;" width="12.3" height="12.3" viewBox="0 0 12.3 12.3"><circle cx="6.150" cy="6.150" r="6.150" fill="#c4c4c4"/><rect x="5.200" y="5" width="2" height="5" fill="#3c3c3c"/><rect x="4.500" y="5" width="2" height="1.100" fill="#3c3c3c"/><rect x="4.300" y="9" width="3.800" height="1.100" fill="#3c3c3c"/><circle cx="6.150" cy="3" r="1.150" fill="#3c3c3c"/></svg>
<div class="t" style="left:1428.74px;top:105.75px;font-size:15px;color:#bdbdbd;transform:scaleX(0.7624)">インスペクター</div>
<div class="r" style="left:157px;top:676px;width:1408px;height:327px;background:#282828;border:1px solid #484848;border-radius:8px 0 0 0;box-shadow:0 5px 18px 2px rgba(0,0,0,.2);box-sizing:border-box"></div>
<svg class="r" style="left:165.29999999999998px;top:684.7px;overflow:visible" width="20.6" height="20.6" viewBox="-13.844 -13.844 27.688 27.688"><polygon points="0,-12.5 10.83,-6.25 10.83,6.25 0,12.5 -10.83,6.25 -10.83,-6.25" fill="#47525e"/><polygon points="0,-10.3 8.92,-5.15 8.92,5.15 0,10.3 -8.92,5.15 -8.92,-5.15" fill="#c8dce1"/><polygon points="0,0.4 8.92,-4.75 8.92,5.15 0,10.3" fill="#000" opacity=".07"/><polygon points="0,-6.7 3.3,-4.7 0,-2.7 -3.3,-4.7" fill="#3a4148"/><polygon points="-5.7,-1.5 -1.9,0.7 -1.9,4.4 -5.7,2.2" fill="#2f363d"/><polygon points="5.7,-1.5 1.9,0.7 1.9,4.4 5.700,2.2" fill="#2f363d"/><path d="M0-10.3V-6.5M-8.92 5.15-5.4 3.1M8.92 5.15 5.4 3.1" stroke="#3a4148" stroke-width="1.1" fill="none"/><text x="5" y="11.600" font-family="Liberation Sans, sans-serif" font-size="19.700" font-weight="bold" font-style="italic" fill="#c9d8dc" stroke="#282828" stroke-width="2" paint-order="stroke">6</text></svg>
<div class="t" style="left:193.54px;top:686.00px;font-size:15px;color:#d2d2d2;transform:scaleX(0.7265)">プロジェクト</div>
<div class="r" style="left:1410px;top:693.5px;width:12px;height:1px;background:#4e4e4e;"></div>
<div class="r" style="left:1468px;top:689px;width:12px;height:12px;background:transparent;border:1px solid #c8c8c8;border-radius:2px;box-sizing:border-box"></div>
<svg class="r" style="left:1527px;top:689px;" width="12" height="12" viewBox="0 0 12 12"><path d="M.5 .5l11 11M11.500 .5l-11 11" stroke="#c8c8c8" stroke-width="1.100" fill="none"/></svg>
<div class="r" style="left:158px;top:714px;width:1387px;height:32.5px;background:#141414;"></div>
<div class="r" style="left:158px;top:717px;width:115.6px;height:30px;background:#3c3c3c;border-radius:0 4px 0 0;border-top:3px solid #2c5d87;box-sizing:border-box"></div>
<svg class="r" style="left:169.4px;top:726.3px;" width="15" height="12" viewBox="0 0 15 12"><path d="M.6 0h5.200l1.700 2.300h6.900a.6.6 0 0 1 .6.600v8.500a.6.6 0 0 1-.6.600h-13.800a.6.6 0 0 1-.6-.6v-10.800a.6.6 0 0 1 .6-.6z" fill="#c4c4c4"/></svg>
<div class="t" style="left:188.81px;top:722.60px;font-size:15px;color:#bdbdbd;transform:scaleX(0.7294)">プロジェクト</div>
<svg class="r" style="left:287px;top:725px;" width="14" height="14" viewBox="0 0 14 14"><circle cx="7" cy="7" r="7" fill="#c4c4c4"/><path d="M7 2.500v5h4" stroke="#141414" stroke-width="1.700" fill="none"/></svg>
<div class="t" style="left:305.31px;top:722.50px;font-size:15px;color:#bdbdbd;transform:scaleX(0.7272)">アニメーション</div>
<svg class="r" style="left:1521.2px;top:723.1px;" width="11.5" height="13" viewBox="0 0 11.5 13"><rect x="1.200" y="7.300" width="8.700" height="4.500" rx=".3" fill="none" stroke="#d8d8d8" stroke-width="1.250"/><path d="M9.200 7V3.500Q9.200 .9 6.500 .9H4.300Q3.300 .9 3.100 1.900" fill="none" stroke="#d8d8d8" stroke-width="1.300"/></svg>
<div class="r" style="left:158px;top:746.5px;width:1387px;height:26px;background:#3c3c3c;"></div>
<div class="r" style="left:158px;top:772px;width:1387px;height:1px;background:#232323;"></div>
<svg class="r" style="left:166.5px;top:752.3px;" width="15" height="15" viewBox="0 0 15 15"><rect x="0" y="6.65" width="15" height="1.700" fill="#c4c4c4"/><rect x="6.65" y="0" width="1.700" height="15" fill="#c4c4c4"/></svg>
<svg class="r" style="left:187px;top:757.4px;" width="9.2" height="5" viewBox="0 0 9.2 5"><polygon points="0,0 9.2,0 4.6,5" fill="#c4c4c4"/></svg>
<div class="r" style="left:980px;top:750.3px;width:396.5px;height:19.5px;background:#282828;border-radius:4px;border:1px solid #1f1f1f;box-sizing:border-box"></div>
<div class="r" style="left:1354.0px;top:751.3px;width:21.5px;height:17.5px;background:#3a3a3a;border-radius:0 3px 3px 0;border-left:1px solid #242424;box-sizing:border-box"></div>
<svg class="r" style="left:1358.4px;top:753.65px;" width="15" height="15" viewBox="0 0 15 15"><rect x="3.500" y=".6" width="10.900" height="11.100" rx=".6" fill="none" stroke="#bdbdbd" stroke-width="1.200"/><rect x=".6" y="9.100" width="5.300" height="5" rx=".5" fill="#3a3a3a" stroke="#bdbdbd" stroke-width="1.200"/><path d="M6 9l4.800-4.800" fill="none" stroke="#bdbdbd" stroke-width="1.300"/><polygon points="8,3.200 12,3.200 12,7.200" fill="#bdbdbd"/></svg>
<svg class="r" style="left:985.5px;top:756.3px;" width="12" height="10" viewBox="0 0 12 10"><circle cx="3.800" cy="3.800" r="2.700" fill="none" stroke="#c4c4c4" stroke-width="1.500"/><path d="M5.800 5.800l3 3.200" stroke="#c4c4c4" stroke-width="1.600" stroke-linecap="round"/></svg>
<div class="r" style="left:1379.8px;top:746.5px;width:1.3px;height:25.5px;background:#2c2c2c;"></div>
<div class="r" style="left:1412.8px;top:746.5px;width:1.3px;height:25.5px;background:#2c2c2c;"></div>
<div class="r" style="left:1444.8px;top:746.5px;width:1.3px;height:25.5px;background:#2c2c2c;"></div>
<div class="r" style="left:1477.8px;top:746.5px;width:1.3px;height:25.5px;background:#2c2c2c;"></div>
<div class="r" style="left:1509.8px;top:746.5px;width:1.3px;height:25.5px;background:#2c2c2c;"></div>
<svg class="r" style="left:1389.4px;top:749.7px;" width="15" height="16.5" viewBox="0 0 15 16.5"><rect x="2.500" y="0" width="6.500" height="7" fill="#c4c4c4"/><circle cx="4" cy="12.300" r="4" fill="#c4c4c4"/><polygon points="11.500,5.500 15,13.500 8,13.500" fill="#c4c4c4"/></svg>
<svg class="r" style="left:1421.5px;top:752.5px;" width="13.5" height="12.5" viewBox="0 0 13.5 12.5"><path d="M6.500 .5h6.500v6.500l-6 5.200-6.500-6.400z" fill="#c4c4c4"/><circle cx="10.300" cy="3.200" r="1.200" fill="#3c3c3c"/></svg>
<svg class="r" style="left:1453px;top:749.7px;" width="16.5" height="16.5" viewBox="0 0 16.5 16.5"><polygon points="4.800,0 11.700,0 16.500,4.800 16.500,11.700 11.700,16.500 4.800,16.500 0,11.700 0,4.800" fill="#d2d2d2"/><rect x="7.200" y="3.200" width="2.100" height="6.800" fill="#3c3c3c"/><rect x="7.200" y="11.300" width="2.100" height="2.100" fill="#3c3c3c"/></svg>
<svg class="r" style="left:1486.8px;top:751.8px;" width="15" height="14" viewBox="0 0 15 14"><polygon points="7.500,0 9.700,4.900 15,5.400 11,8.900 12.200,14 7.500,11.300 2.800,14 4,8.900 0,5.400 5.300,4.900" fill="#9c9c9c"/></svg>
<svg class="r" style="left:1518.8px;top:753.8px;" width="18" height="10" viewBox="0 0 18 10"><path d="M0 5c2.500-3.300 5.500-5 9-5s6.500 1.700 9 5c-2.500 3.300-5.500 5-9 5s-6.500-1.700-9-5z" fill="#666"/><circle cx="9" cy="5" r="3.400" fill="#555"/><path d="M1.500 5c2.200-2.600 4.700-3.800 7.500-3.800s5.300 1.200 7.500 3.800" fill="none" stroke="#7a7a7a" stroke-width="1"/></svg>
<div class="t" style="left:1538.41px;top:748.80px;font-size:14px;color:#c4c4c4;transform:scaleX(1.0700)">2</div>
<div class="r" style="left:158px;top:773px;width:160px;height:210px;background:#383838;"></div>
<div class="r" style="left:158px;top:773px;width:160px;height:20px;background:#4d4d4d;"></div>
<div class="r" style="left:318px;top:773px;width:16px;height:210px;background:#353535;"></div>
<div class="r" style="left:334px;top:773px;width:1px;height:210px;background:#1f1f1f;"></div>
<div class="r" style="left:335px;top:773px;width:1210px;height:26px;background:#414141;"></div>
<div class="r" style="left:335px;top:799px;width:1210px;height:184px;background:#333333;"></div>
<svg class="r" style="left:321.7px;top:780.7px;" width="9.6" height="5.3" viewBox="0 0 9.6 5.3"><polygon points="0,5.300 9.600,5.300 4.800,0" fill="#d0d0d0"/></svg>
<div class="r" style="left:320.3px;top:841px;width:12.4px;height:160px;background:#5f5f5f;border-radius:6.200px"></div>
<div class="r" style="left:158px;top:773px;width:161px;height:210px;overflow:hidden">
<svg class="r" style="left:4.699999999999989px;top:6.100000000000023px;" width="10.5" height="8.5" viewBox="0 0 10.5 8.5"><polygon points="0,0 10.500,0 5.250,8.500" fill="#6e6e6e"/></svg>
<svg class="r" style="left:22px;top:3.800000000000068px;" width="17.5" height="12" viewBox="0 0 17.5 12"><path d="M1 11V1.300a.6.6 0 0 1 .6-.6h4.200l1.500 1.900h6.200a.6.6 0 0 1 .6.600v1.500" fill="none" stroke="#c4c4c4" stroke-width="1.300"/><path d="M3.800 4.700h13.200a.4.4 0 0 1 .4.500l-2.300 6.300a.7.700 0 0 1-.7.500h-13.400z" fill="#c4c4c4"/></svg>
<div class="t" style="left:44.74px;top:1.10px;font-size:14px;color:#d2d2d2;transform:scaleX(1.0605);font-weight:bold">Assets</div>
<svg class="r" style="left:24px;top:24.5px;" width="9.3" height="10.5" viewBox="0 0 9.3 10.5"><polygon points="0,0 9.300,5.250 0,10.500" fill="#6e6e6e"/></svg>
<svg class="r" style="left:39.599999999999994px;top:23.5px;" width="15" height="12" viewBox="0 0 15 12"><path d="M.6 0h5.200l1.700 2.300h6.900a.6.6 0 0 1 .6.600v8.500a.6.6 0 0 1-.6.600h-13.800a.6.6 0 0 1-.6-.6v-10.800a.6.6 0 0 1 .6-.6z" fill="#c4c4c4"/></svg>
<div class="t" style="left:59.62px;top:21.10px;font-size:14px;color:#c4c4c4;transform:scaleX(1.1400)">ClusterCreator</div>
<svg class="r" style="left:24px;top:44.5px;" width="9.3" height="10.5" viewBox="0 0 9.3 10.5"><polygon points="0,0 9.300,5.250 0,10.500" fill="#6e6e6e"/></svg>
<svg class="r" style="left:39.599999999999994px;top:43.5px;" width="15" height="12" viewBox="0 0 15 12"><path d="M.6 0h5.200l1.700 2.300h6.900a.6.6 0 0 1 .6.600v8.500a.6.6 0 0 1-.6.600h-13.800a.6.6 0 0 1-.6-.6v-10.800a.6.6 0 0 1 .6-.6z" fill="#c4c4c4"/></svg>
<div class="t" style="left:59.67px;top:41.10px;font-size:14px;color:#c4c4c4;transform:scaleX(1.0900)">ClusterGAMEW</div>
<svg class="r" style="left:24px;top:64.5px;" width="9.3" height="10.5" viewBox="0 0 9.3 10.5"><polygon points="0,0 9.300,5.250 0,10.500" fill="#6e6e6e"/></svg>
<svg class="r" style="left:39.599999999999994px;top:63.5px;" width="15" height="12" viewBox="0 0 15 12"><path d="M.6 0h5.200l1.700 2.300h6.900a.6.6 0 0 1 .6.600v8.500a.6.6 0 0 1-.6.600h-13.800a.6.6 0 0 1-.6-.6v-10.800a.6.6 0 0 1 .6-.6z" fill="#c4c4c4"/></svg>
<div class="t" style="left:59.64px;top:61.10px;font-size:14px;color:#c4c4c4;transform:scaleX(1.1165)">ClusterVR</div>
<svg class="r" style="left:4.699999999999989px;top:86.10000000000002px;" width="10.5" height="8.5" viewBox="0 0 10.5 8.5"><polygon points="0,0 10.500,0 5.250,8.500" fill="#6e6e6e"/></svg>
<svg class="r" style="left:22px;top:83.80000000000007px;" width="17.5" height="12" viewBox="0 0 17.5 12"><path d="M1 11V1.300a.6.6 0 0 1 .6-.6h4.200l1.500 1.900h6.200a.6.6 0 0 1 .6.600v1.500" fill="none" stroke="#c4c4c4" stroke-width="1.300"/><path d="M3.800 4.700h13.200a.4.4 0 0 1 .4.500l-2.300 6.300a.7.700 0 0 1-.7.500h-13.400z" fill="#c4c4c4"/></svg>
<div class="t" style="left:43.64px;top:81.10px;font-size:14px;color:#d2d2d2;transform:scaleX(1.0950);font-weight:bold">Packages</div>
<svg class="r" style="left:24px;top:104.5px;" width="9.3" height="10.5" viewBox="0 0 9.3 10.5"><polygon points="0,0 9.300,5.250 0,10.500" fill="#6e6e6e"/></svg>
<svg class="r" style="left:39.599999999999994px;top:103.5px;" width="15" height="12" viewBox="0 0 15 12"><path d="M.6 0h5.200l1.700 2.300h6.900a.6.6 0 0 1 .6.600v8.500a.6.6 0 0 1-.6.600h-13.800a.6.6 0 0 1-.6-.6v-10.800a.6.6 0 0 1 .6-.6z" fill="#c4c4c4"/></svg>
<div class="t" style="left:59.61px;top:101.10px;font-size:14px;color:#c4c4c4;transform:scaleX(1.1401)">2D Sprite</div>
<svg class="r" style="left:24px;top:124.5px;" width="9.3" height="10.5" viewBox="0 0 9.3 10.5"><polygon points="0,0 9.300,5.250 0,10.500" fill="#6e6e6e"/></svg>
<svg class="r" style="left:39.599999999999994px;top:123.5px;" width="15" height="12" viewBox="0 0 15 12"><path d="M.6 0h5.200l1.700 2.300h6.900a.6.6 0 0 1 .6.600v8.500a.6.6 0 0 1-.6.600h-13.800a.6.6 0 0 1-.6-.6v-10.800a.6.6 0 0 1 .6-.6z" fill="#c4c4c4"/></svg>
<div class="t" style="left:59.63px;top:121.10px;font-size:14px;color:#c4c4c4;transform:scaleX(1.1250)">2D Tilemap Editor</div>
<svg class="r" style="left:24px;top:144.5px;" width="9.3" height="10.5" viewBox="0 0 9.3 10.5"><polygon points="0,0 9.300,5.250 0,10.500" fill="#6e6e6e"/></svg>
<svg class="r" style="left:39.599999999999994px;top:143.5px;" width="15" height="12" viewBox="0 0 15 12"><path d="M.6 0h5.200l1.700 2.300h6.900a.6.6 0 0 1 .6.600v8.500a.6.6 0 0 1-.6.600h-13.800a.6.6 0 0 1-.6-.6v-10.800a.6.6 0 0 1 .6-.6z" fill="#c4c4c4"/></svg>
<div class="t" style="left:60.76px;top:141.10px;font-size:14px;color:#c4c4c4;transform:scaleX(1.1205)">AI Navigation</div>
<svg class="r" style="left:24px;top:164.5px;" width="9.3" height="10.5" viewBox="0 0 9.3 10.5"><polygon points="0,0 9.300,5.250 0,10.500" fill="#6e6e6e"/></svg>
<svg class="r" style="left:39.599999999999994px;top:163.5px;" width="15" height="12" viewBox="0 0 15 12"><path d="M.6 0h5.200l1.700 2.300h6.900a.6.6 0 0 1 .6.600v8.500a.6.6 0 0 1-.6.600h-13.800a.6.6 0 0 1-.6-.6v-10.800a.6.6 0 0 1 .6-.6z" fill="#c4c4c4"/></svg>
<div class="t" style="left:59.62px;top:161.10px;font-size:14px;color:#c4c4c4;transform:scaleX(1.1327)">Burst</div>
<svg class="r" style="left:24px;top:184.5px;" width="9.3" height="10.5" viewBox="0 0 9.3 10.5"><polygon points="0,0 9.300,5.250 0,10.500" fill="#6e6e6e"/></svg>
<svg class="r" style="left:39.599999999999994px;top:183.5px;" width="15" height="12" viewBox="0 0 15 12"><path d="M.6 0h5.200l1.700 2.300h6.900a.6.6 0 0 1 .6.600v8.500a.6.6 0 0 1-.6.600h-13.800a.6.6 0 0 1-.6-.6v-10.800a.6.6 0 0 1 .6-.6z" fill="#c4c4c4"/></svg>
<div class="t" style="left:59.62px;top:181.10px;font-size:14px;color:#c4c4c4;transform:scaleX(1.1400)">Cluster Creator Kit</div>
<svg class="r" style="left:24px;top:204.5px;" width="9.3" height="10.5" viewBox="0 0 9.3 10.5"><polygon points="0,0 9.300,5.250 0,10.500" fill="#6e6e6e"/></svg>
<svg class="r" style="left:39.599999999999994px;top:203.5px;" width="15" height="12" viewBox="0 0 15 12"><path d="M.6 0h5.200l1.700 2.300h6.900a.6.6 0 0 1 .6.600v8.500a.6.6 0 0 1-.6.600h-13.800a.6.6 0 0 1-.6-.6v-10.800a.6.6 0 0 1 .6-.6z" fill="#c4c4c4"/></svg>
<div class="t" style="left:59.61px;top:201.10px;font-size:14px;color:#c4c4c4;transform:scaleX(1.1454)">Collections</div>
</div>
<div class="t" style="left:341.52px;top:774.50px;font-size:14px;color:#d2d2d2;transform:scaleX(1.0766);font-weight:bold">Assets</div>
<svg class="r" style="left:364px;top:826.6px;" width="60" height="50.5" viewBox="0 0 60 50.5"><path d="M5.500 0H23.200a2.500 2.500 0 0 1 2.100 1.100L31.300 10H54.500a5.500 5.500 0 0 1 5.500 5.500V45a5.500 5.500 0 0 1-5.500 5.500H5.500a5.500 5.500 0 0 1-5.500-5.500V5.500a5.500 5.500 0 0 1 5.500-5.500z" fill="#c2c2c2"/></svg>
<div class="t" style="left:355.50px;top:892.40px;font-size:12px;color:#c0c0c0;transform:scaleX(1.0477)">ClusterCrea...</div>
<svg class="r" style="left:459px;top:826.6px;" width="60" height="50.5" viewBox="0 0 60 50.5"><path d="M5.500 0H23.200a2.500 2.500 0 0 1 2.100 1.100L31.300 10H54.500a5.500 5.500 0 0 1 5.500 5.500V45a5.500 5.500 0 0 1-5.500 5.500H5.500a5.500 5.500 0 0 1-5.500-5.500V5.500a5.500 5.500 0 0 1 5.500-5.500z" fill="#c2c2c2"/></svg>
<div class="t" style="left:450.50px;top:892.40px;font-size:12px;color:#c0c0c0;transform:scaleX(1.0265)">ClusterGAM...</div>
<svg class="r" style="left:554px;top:826.6px;" width="60" height="50.5" viewBox="0 0 60 50.5"><path d="M5.500 0H23.200a2.500 2.500 0 0 1 2.100 1.100L31.300 10H54.500a5.500 5.500 0 0 1 5.500 5.500V45a5.500 5.500 0 0 1-5.500 5.500H5.500a5.500 5.500 0 0 1-5.500-5.500V5.500a5.500 5.500 0 0 1 5.500-5.500z" fill="#c2c2c2"/></svg>
<div class="t" style="left:557.00px;top:892.40px;font-size:12px;color:#c0c0c0;transform:scaleX(1.0322)">ClusterVR</div>
</body></html>
